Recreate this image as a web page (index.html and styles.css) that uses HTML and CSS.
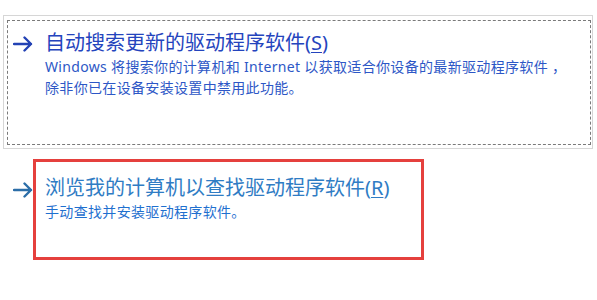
FILE: index.html
```html
<!DOCTYPE html>
<html lang="zh-CN">
<head>
<meta charset="utf-8">
<title>更新驱动程序</title>
<link rel="stylesheet" href="styles.css">
</head>
<body>
<div class="page">
  <div class="option-outer">
    <div class="option-focus">
      <svg class="arrow arrow-dark" viewBox="0 0 20 16" width="20" height="16"><path d="M1 8 H18 M11.5 1.5 L18 8 L11.5 14.5" fill="none" stroke="currentColor" stroke-width="2.4" stroke-linecap="round" stroke-linejoin="round"/></svg>
      <div class="texts">
        <div class="title title-dark">自动搜索更新的驱动程序软件(<u>S</u>)</div>
        <div class="desc desc-dark">Windows 将搜索你的计算机和 Internet 以获取适合你设备的最新驱动程序软件 ，<br>除非你已在设备安装设置中禁用此功能。</div>
      </div>
    </div>
  </div>
  <div class="option-two">
    <svg class="arrow arrow-light" viewBox="0 0 20 16" width="20" height="16"><path d="M1 8 H18 M11.5 1.5 L18 8 L11.5 14.5" fill="none" stroke="currentColor" stroke-width="2.4" stroke-linecap="round" stroke-linejoin="round"/></svg>
    <div class="highlight">
      <div class="title title-light">浏览我的计算机以查找驱动程序软件(<u>R</u>)</div>
      <div class="desc desc-light">手动查找并安装驱动程序软件。</div>
    </div>
  </div>
</div>
</body>
</html>
```
FILE: styles.css
```css
html, body {
  margin: 0;
  padding: 0;
  background: #ffffff;
}
body {
  font-family: "Noto Sans", "Noto Sans CJK SC", sans-serif;
  width: 597px;
  height: 300px;
  overflow: hidden;
}
.page {
  padding: 15px 4px 0 3px;
}
.option-outer {
  border: 1px solid #d6d6d6;
  padding: 4px 1px 3px 3px;
}
.option-focus {
  border: 1px dashed #7a7a7a;
  display: flex;
  align-items: flex-start;
  padding: 9px 0 46px 5px;
}
.arrow {
  flex: none;
  display: block;
}
.arrow-dark {
  color: #2342b4;
  margin-top: 6px;
}
.arrow-light {
  color: #2c6ea8;
  margin-top: 23px;
}
.texts {
  margin-left: 12px;
}
.title {
  font-size: 20px;
  line-height: 26px;
  white-space: nowrap;
}
.title u {
  text-underline-offset: 2px;
  text-decoration-thickness: 1px;
}
.desc {
  font-size: 14px;
  line-height: 21px;
  letter-spacing: 0.33px;
  white-space: nowrap;
}
.title-dark { color: #2444bd; }
.desc-dark { color: #2d57c6; }
.title-light { color: #2f7cc4; }
.desc-light { color: #1f70cf; }
.option-two {
  display: flex;
  align-items: flex-start;
  margin-top: 10px;
  margin-left: 10px;
}
.highlight {
  border: 3px solid #e5403d;
  width: 376px;
  padding: 13px 0 35px 9px;
}
```
